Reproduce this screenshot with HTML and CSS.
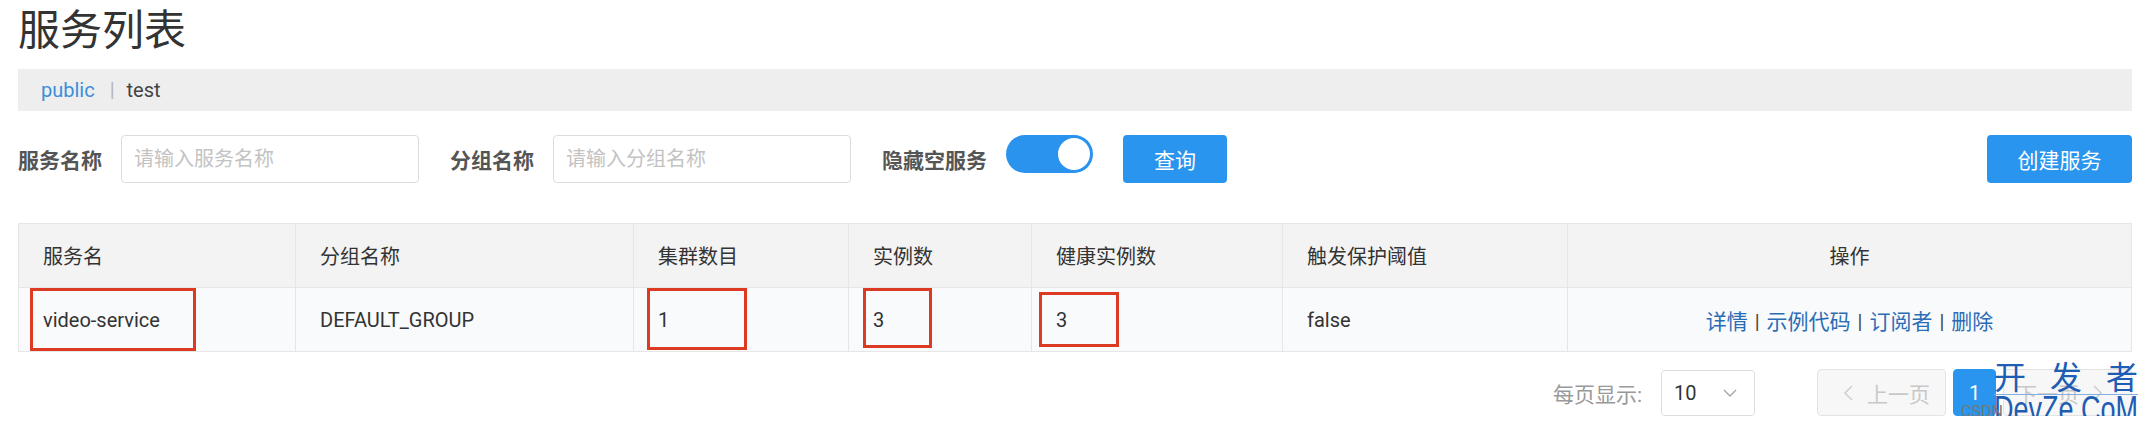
FILE: index.html
```html
<!DOCTYPE html>
<html lang="zh-CN">

<head>
    <meta charset="UTF-8">
    <meta name="viewport" content="width=device-width, initial-scale=1.0">
    <title>服务列表</title>
    <link rel="stylesheet" href="styles.css">
</head>

<body>
    <div class="page">
        <h1 class="pageTitle">服务列表</h1>

        <div class="crumbs">
            <a class="crumbLink" href="#">public</a>
            <span class="crumbSep">|</span>
            <span class="crumbItem">test</span>
        </div>

        <form class="filters">
            <label class="fieldLabel">服务名称</label>
            <input class="fieldInput" type="text" placeholder="请输入服务名称">
            <label class="fieldLabel">分组名称</label>
            <input class="fieldInput" type="text" placeholder="请输入分组名称">
            <label class="fieldLabel">隐藏空服务</label>
            <span class="switch"><span class="switchKnob"></span></span>
            <button type="button" class="btn btnQuery">查询</button>
            <button type="button" class="btn btnCreate">创建服务</button>
        </form>

        <div class="tableWrap">
            <table class="serviceTable">
                <colgroup>
                    <col style="width:277px">
                    <col style="width:338px">
                    <col style="width:215px">
                    <col style="width:183px">
                    <col style="width:251px">
                    <col style="width:285px">
                    <col>
                </colgroup>
                <thead>
                    <tr>
                        <th>服务名</th>
                        <th>分组名称</th>
                        <th>集群数目</th>
                        <th>实例数</th>
                        <th>健康实例数</th>
                        <th>触发保护阈值</th>
                        <th class="center">操作</th>
                    </tr>
                </thead>
                <tbody>
                    <tr>
                        <td>video-service</td>
                        <td>DEFAULT_GROUP</td>
                        <td>1</td>
                        <td>3</td>
                        <td>3</td>
                        <td>false</td>
                        <td class="center ops">
                            <a class="opLink" href="#">详情</a><span class="opSep">|</span><a class="opLink" href="#">示例代码</a><span class="opSep">|</span><a class="opLink" href="#">订阅者</a><span class="opSep">|</span><a class="opLink" href="#">删除</a>
                        </td>
                    </tr>
                </tbody>
            </table>

            <!-- red annotation boxes drawn over the table -->
            <span class="mark markName"></span>
            <span class="mark markCluster"></span>
            <span class="mark markInstance"></span>
            <span class="mark markHealthy"></span>
        </div>

        <div class="pager">
            <span class="pagerLabel">每页显示:</span>
            <div class="pageSize">
                <span>10</span>
                <svg width="16" height="10" viewBox="0 0 16 10"><polyline points="2,2 8,8 14,2" fill="none" stroke="#a8a8a8" stroke-width="1.4"/></svg>
            </div>
            <button type="button" class="pgBtn" disabled>
                <svg width="11" height="18" viewBox="0 0 11 18"><polyline points="9,2 2,9 9,16" fill="none" stroke="#cfcfcf" stroke-width="1.6"/></svg>
                <span>上一页</span>
            </button>
            <button type="button" class="pgBtn pgCurrent">1</button>
            <button type="button" class="pgBtn pgNext" disabled>
                <span>下一页</span>
                <svg width="11" height="18" viewBox="0 0 11 18"><polyline points="2,2 9,9 2,16" fill="none" stroke="#cfcfcf" stroke-width="1.6"/></svg>
            </button>
        </div>

        <div class="watermark">
            <div class="wmTop">开发者</div>
            <div class="wmBottom">DevZe.CoM</div>
            <span class="wmCsdn">CSDN</span>
        </div>
    </div>
</body>

</html>
```

FILE: styles.css
```css
body {
    margin: 0;
    font-family: Roboto, "Noto Sans CJK SC", sans-serif;
    color: #333;
    background: #fff;
}

.page {
    position: relative;
    padding: 0 18px;
}

.pageTitle {
    margin: 0 0 7px;
    height: 62px;
    font-size: 42px;
    font-weight: normal;
    line-height: 62px;
    color: #333;
}

.crumbs {
    display: flex;
    align-items: center;
    height: 42px;
    padding-left: 23px;
    background: #eeeeee;
    font-size: 20px;
}

.crumbLink {
    color: #3b8fd9;
    text-decoration: none;
}

.crumbSep {
    margin: 0 12px 0 15px;
    color: #b5b5b5;
}

.crumbItem {
    color: #444;
}

.filters {
    display: flex;
    align-items: center;
    height: 48px;
    margin: 24px 0 0;
}

.fieldLabel {
    margin-right: 19px;
    font-size: 21px;
    font-weight: bold;
    color: #555;
}

.fieldInput {
    width: 298px;
    height: 48px;
    box-sizing: border-box;
    margin-right: 31px;
    padding: 0 12px;
    border: 1px solid #dcdcdc;
    border-radius: 4px;
    font: 20px Roboto, "Noto Sans CJK SC", sans-serif;
    color: #333;
    outline: none;
}

.fieldInput::placeholder {
    color: #c3c3c3;
}

.switch {
    display: flex;
    justify-content: flex-end;
    align-self: flex-start;
    width: 87px;
    height: 38px;
    box-sizing: border-box;
    margin-right: 30px;
    padding: 1px;
    border-radius: 19px;
    background: #2a93ee;
}

.switchKnob {
    width: 36px;
    height: 36px;
    box-sizing: border-box;
    border: 2px solid #2a93ee;
    border-radius: 50%;
    background: #fff;
}

.btn {
    height: 48px;
    padding: 0;
    border: 0;
    border-radius: 4px;
    background: #2a95ef;
    color: #fff;
    font: 21px Roboto, "Noto Sans CJK SC", sans-serif;
    cursor: pointer;
}

.btnQuery {
    width: 104px;
}

.btnCreate {
    width: 145px;
    margin-left: auto;
}

.tableWrap {
    position: relative;
    margin-top: 40px;
}

.serviceTable {
    width: 100%;
    border-collapse: collapse;
    table-layout: fixed;
    font-size: 20px;
}

.serviceTable th,
.serviceTable td {
    height: 63px;
    padding: 0 24px;
    border: 1px solid #e6e6e6;
    text-align: left;
    font-weight: normal;
    color: #333;
    white-space: nowrap;
}

.serviceTable th {
    background: #f3f3f3;
}

.serviceTable td {
    background: #f9fafb;
}

.serviceTable .center {
    text-align: center;
}

.serviceTable .ops {
    font-size: 21px;
}

.opLink {
    color: #2a6cb5;
    text-decoration: none;
}

.opSep {
    margin: 0 7px;
    font-size: 20px;
    color: #444;
}

.mark {
    position: absolute;
    box-sizing: border-box;
    border: 3px solid #dc3a22;
}

.markName {
    left: 12px;
    top: 65px;
    width: 166px;
    height: 63px;
}

.markCluster {
    left: 629px;
    top: 65px;
    width: 100px;
    height: 62px;
}

.markInstance {
    left: 845px;
    top: 65px;
    width: 69px;
    height: 60px;
}

.markHealthy {
    left: 1021px;
    top: 69px;
    width: 80px;
    height: 55px;
}

.pager {
    display: flex;
    justify-content: flex-end;
    align-items: center;
    margin-top: 17px;
    height: 47px;
}

.pagerLabel {
    margin-right: 19px;
    font-size: 21px;
    color: #999;
}

.pageSize {
    display: flex;
    align-items: center;
    justify-content: space-between;
    width: 94px;
    height: 46px;
    box-sizing: border-box;
    margin-right: 62px;
    padding: 0 16px 0 12px;
    border: 1px solid #dddddd;
    border-radius: 4px;
    font-size: 20px;
    color: #333;
}

.pgBtn {
    display: flex;
    align-items: center;
    gap: 13px;
    width: 129px;
    height: 47px;
    box-sizing: border-box;
    padding: 0 12px 0 25px;
    border: 1px solid #e3e3e3;
    border-radius: 4px;
    background: #f7f7f7;
    color: #c8c8c8;
    font: 21px Roboto, "Noto Sans CJK SC", sans-serif;
    white-space: nowrap;
}

.pgCurrent {
    justify-content: center;
    width: 43px;
    margin: 0 7px;
    padding: 0;
    border-color: #2a95ef;
    background: #2a95ef;
    color: #fff;
    font-size: 20px;
}

.pgNext {
    padding: 0 25px 0 12px;
}

.watermark {
    position: absolute;
    top: 362px;
    right: 12px;
    width: 144px;
    color: #1d5db3;
}

.wmTop {
    height: 32px;
    border-bottom: 1px solid #86aede;
    font-size: 32px;
    line-height: 32px;
    letter-spacing: 24px;
    white-space: nowrap;
}

.wmBottom {
    font-family: "Liberation Sans", sans-serif;
    font-size: 36px;
    line-height: 30px;
    transform: scaleX(0.75);
    transform-origin: left center;
    white-space: nowrap;
}

.wmCsdn {
    position: absolute;
    left: -33px;
    top: 40px;
    font-size: 16px;
    color: #777;
}
```
